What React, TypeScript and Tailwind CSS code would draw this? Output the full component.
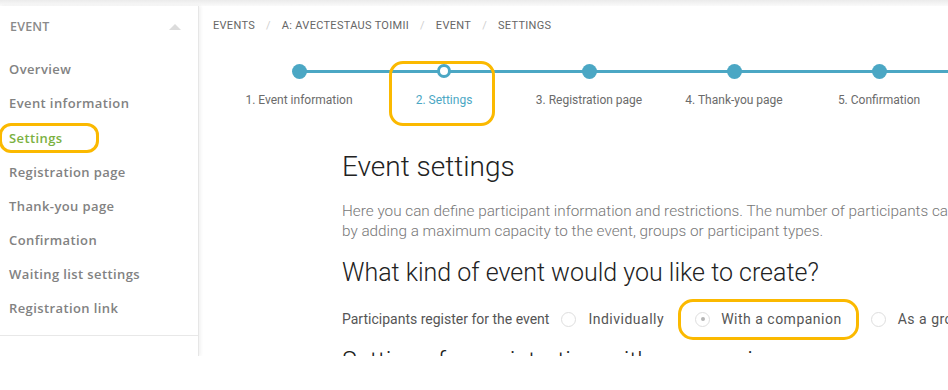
import React from 'react';

const menu = [
  'Overview',
  'Event information',
  'Settings',
  'Registration page',
  'Thank-you page',
  'Confirmation',
  'Waiting list settings',
  'Registration link',
];

const steps = [
  '1. Event information',
  '2. Settings',
  '3. Registration page',
  '4. Thank-you page',
  '5. Confirmation',
];

const crumbs = ['EVENTS', 'A: AVECTESTAUS TOIMII', 'EVENT', 'SETTINGS'];

const Radio = ({ checked = false }: { checked?: boolean }) => (
  <span className="w-[15px] h-[15px] rounded-full border border-[#dedede] bg-white flex items-center justify-center shrink-0">
    {checked && <span className="w-[4px] h-[4px] rounded-full bg-[#b5b5b5]" />}
  </span>
);

const Sidebar = () => (
  <aside className="w-[199px] shrink-0 flex flex-col border-r border-[#e6e6e6] shadow-[2px_0_3px_rgba(0,0,0,0.05)] font-['Open_Sans',sans-serif]">
    <div className="h-[42px] flex items-center justify-between pl-[10px] pr-[17px]">
      <span className="text-[12.5px] font-semibold text-[#8a8a8a] tracking-[0.2px]">EVENT</span>
      <span className="w-0 h-0 border-l-[6px] border-r-[6px] border-b-[6px] border-l-transparent border-r-transparent border-b-[#dcdcdc]" />
    </div>
    <ul className="pt-[5px] pb-[9px]">
      {menu.map((item) => (
        <li key={item} className="relative h-[34.15px] flex items-center pl-[9px]">
          <span
            className={`text-[13px] font-semibold tracking-[0.4px] ${
              item === 'Settings' ? 'text-[#7bb13f]' : 'text-[#828282]'
            }`}
          >
            {item}
          </span>
          {item === 'Settings' && (
            <span className="absolute left-[-1px] top-[2px] w-[100px] h-[30px] rounded-[12px] border-[3px] border-[#fbb900]" />
          )}
        </li>
      ))}
    </ul>
    <div className="border-t border-[#e8e8e8] flex-1" />
  </aside>
);

const Stepper = () => (
  <div className="flex pl-[27.5px] pt-[16px]">
    {steps.map((label, i) => (
      <div key={label} className="relative w-[145px] shrink-0 flex flex-col items-center">
        <div className="relative w-full h-[16px] flex items-center justify-center">
          <span
            className={`absolute top-[6.5px] h-[3px] bg-[#4ba7c4] ${i === 0 ? 'left-1/2 right-0' : 'left-0 right-0'}`}
          />
          {i === 1 ? (
            <span className="relative w-[14px] h-[14px] rounded-full bg-white border-[3px] border-[#4ba7c4]" />
          ) : (
            <span className="relative w-[15px] h-[15px] rounded-full bg-[#4ba7c4]" />
          )}
        </div>
        <span className={`mt-[12px] text-[12px] ${i === 1 ? 'text-[#4ba7c4]' : 'text-[#6b6b6b]'}`}>{label}</span>
        {i === 1 && (
          <span className="absolute left-[17px] top-[-2px] w-[106px] h-[65px] rounded-[14px] border-[3px] border-[#fbb900]" />
        )}
      </div>
    ))}
  </div>
);

export default function App() {
  return (
    <div className="w-[948px] h-[390px] bg-white overflow-hidden font-['Roboto',sans-serif]">
      <div className="h-[356px] flex flex-col overflow-hidden">
        <div className="h-[6px] shrink-0 bg-gradient-to-b from-[#ebebeb] to-[#fafafa]" />
        <div className="flex flex-1 min-h-0">
          <Sidebar />
          <main className="flex-1 min-w-0 overflow-hidden">
            <nav className="h-[41px] flex items-center pl-[14px] text-[11px] text-[#666] tracking-[0.3px]">
              {crumbs.map((c, i) => (
                <React.Fragment key={c}>
                  {i > 0 && <span className="mx-[11px] text-[#cfcfcf]">/</span>}
                  <span>{c}</span>
                </React.Fragment>
              ))}
            </nav>
            <Stepper />
            <section className="pl-[143px] pt-[41px] whitespace-nowrap">
              <h1 className="text-[28px] font-light text-[#222] leading-[34px]">Event settings</h1>
              <p className="mt-[17px] text-[15.3px] font-light text-[#777] leading-[20px]">
                Here you can define participant information and restrictions. The number of participants can be limited
                <br />
                by adding a maximum capacity to the event, groups or participant types.
              </p>
              <h2 className="mt-[16px] text-[25px] font-light text-[#222] leading-[32px]">
                What kind of event would you like to create?
              </h2>
              <div className="mt-[20px] h-[20px] flex items-center text-[14px] text-[#555]">
                <span>Participants register for the event</span>
                <span className="ml-[12px]"><Radio /></span>
                <span className="ml-[12px] tracking-[0.5px]">Individually</span>
                <span className="relative ml-[31px] h-[20px] flex items-center">
                  <Radio checked />
                  <span className="ml-[11px] tracking-[0.5px]">With a companion</span>
                  <span className="absolute left-[-17px] top-[-10px] w-[181px] h-[41px] rounded-[15px] border-[3px] border-[#fbb900]" />
                </span>
                <span className="ml-[29px]"><Radio /></span>
                <span className="ml-[12px] tracking-[0.5px]">As a group</span>
              </div>
              <h2 className="mt-[17px] text-[25px] font-light text-[#222] leading-[32px]">
                Settings for registration with companion
              </h2>
            </section>
          </main>
        </div>
      </div>
    </div>
  );
}
